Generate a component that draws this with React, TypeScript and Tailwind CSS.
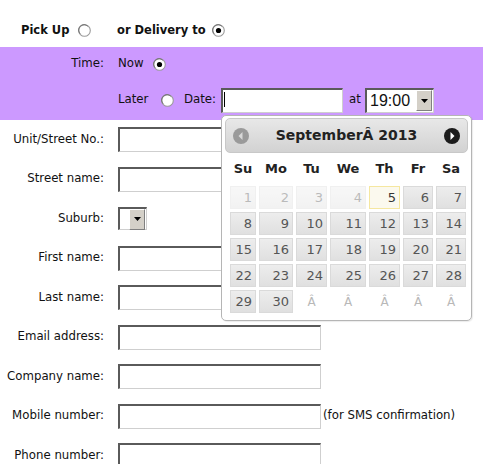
import React from 'react';

// Classic XP-style radio button
function Radio({ checked }: { checked?: boolean }) {
  return (
    <svg width="13" height="13" viewBox="0 0 13 13" className="shrink-0">
      <circle cx="6.5" cy="6.5" r="5.8" fill="#fff" stroke="#9a9a9a" strokeWidth="1.1" />
      <path d="M2.2 9.8 A5.3 5.3 0 0 1 9.8 2.2" fill="none" stroke="#6f6f6f" strokeWidth="1" />
      {checked && <circle cx="6.5" cy="6.5" r="2.6" fill="#000" />}
    </svg>
  );
}

function TextInput({ className = 'w-[203px]' }: { className?: string }) {
  return (
    <div
      className={`${className} h-[25px] bg-white border-t-2 border-l-2 border-b border-r border-t-[#5a5a5a] border-l-[#5a5a5a] border-b-[#cfcfcf] border-r-[#cfcfcf]`}
    />
  );
}

function SelectArrow() {
  return (
    <div className="w-[16px] h-[21px] bg-[#d4d0c8] border border-t-white border-l-white border-b-[#808080] border-r-[#808080] flex items-center justify-center">
      <svg width="7" height="4" viewBox="0 0 7 4">
        <path d="M0 0 H7 L3.5 4 Z" fill="#000" />
      </svg>
    </div>
  );
}

const labelFont = { fontFamily: 'Tahoma, "DejaVu Sans", sans-serif' };

function Row({ label, children }: { label: string; children: React.ReactNode }) {
  return (
    <div className="flex items-center h-[25px] mb-[14.5px]">
      <div className="w-[104px] text-right text-[11.75px] text-[#111]">{label}</div>
      <div className="ml-[14px] flex items-center">{children}</div>
    </div>
  );
}

const days = [
  { n: '1', s: 'dis' },
  { n: '2', s: 'dis' },
  { n: '3', s: 'dis' },
  { n: '4', s: 'dis' },
  { n: '5', s: 'today' },
  { n: '6', s: '' },
  { n: '7', s: '' },
];

function Calendar() {
  const cells: { n: string; s: string }[] = [...days];
  for (let i = 8; i <= 30; i++) cells.push({ n: String(i), s: '' });
  for (let i = 0; i < 5; i++) cells.push({ n: 'Â', s: 'empty' });
  const names = ['Su', 'Mo', 'Tu', 'We', 'Th', 'Fr', 'Sa'];

  return (
    <div
      className="absolute left-[221px] top-[115px] w-[251px] h-[206px] bg-white border border-[#b5b5b5] rounded-[5px] shadow-[1px_1px_1px_rgba(0,0,0,0.08)]"
      style={{ fontFamily: 'Verdana, "DejaVu Sans", sans-serif' }}
    >
      <div className="mx-[3px] mt-[2px] h-[35px] rounded-[5px] border border-[#c8c8c8] bg-gradient-to-b from-[#e8e8e8] to-[#d2d2d2] flex items-center justify-between px-[6px]">
        <svg width="18" height="18" viewBox="0 0 18 18">
          <circle cx="9" cy="9" r="8" fill="#9a9a9a" />
          <path d="M10.5 5 L6.5 9 L10.5 13 Z" fill="#d8d8d8" />
        </svg>
        <div className="text-[14px] font-bold text-[#222]">SeptemberÂ 2013</div>
        <svg width="18" height="18" viewBox="0 0 18 18">
          <circle cx="9" cy="9" r="8" fill="#1c1c1c" />
          <path d="M7.5 5 L11.5 9 L7.5 13 Z" fill="#fff" />
        </svg>
      </div>
      <div className="ml-[8px] mt-[2px] grid grid-cols-[26px_34px_31px_36px_31px_30px_30px] gap-x-[3px] gap-y-[3px]">
        {names.map((d) => (
          <div key={d} className="h-[28px] flex items-center justify-center text-[13px] font-bold text-[#222]">
            {d}
          </div>
        ))}
        {cells.map((c, i) =>
          c.s === 'empty' ? (
            <div key={i} className="h-[23px] flex items-center justify-center text-[12px] text-[#b8b8b8]">
              Â
            </div>
          ) : (
            <div
              key={i}
              className={`h-[23px] flex items-center justify-end pr-[3px] text-[13px] border ${
                c.s === 'today'
                  ? 'border-[#f5e7a0] bg-[#fbf9ee] text-[#363636]'
                  : 'border-[#dadada] bg-gradient-to-b from-[#ededed] to-[#e0e0e0] text-[#555]'
              } ${c.s === 'dis' ? 'opacity-40' : ''}`}
            >
              {c.n}
            </div>
          )
        )}
      </div>
    </div>
  );
}

export default function App() {
  return (
    <div className="relative w-[483px] h-[464px] bg-white overflow-hidden" style={labelFont}>
      {/* Pick up / delivery */}
      <div className="h-[47px] pt-[14px] pl-[21px] flex items-center text-[11.5px] font-bold text-[#111]">
        <span className="w-[57px]">Pick Up</span>
        <Radio />
        <span className="ml-[26px] w-[95px]">or Delivery to</span>
        <Radio checked />
      </div>

      {/* Time band */}
      <div className="h-[73px] bg-[#cc99ff] text-[11.75px] text-[#111]">
        <div className="h-[34px] flex items-center">
          <div className="w-[104px] text-right">Time:</div>
          <span className="ml-[14px] w-[35px]">Now</span>
          <Radio checked />
        </div>
        <div className="h-[38px] flex items-center pl-[118px]">
          <span className="w-[43px]">Later</span>
          <Radio />
          <span className="ml-[10px] w-[37px]">Date:</span>
          <div className="relative">
            <TextInput className="w-[122px]" />
            <div className="absolute left-[3px] top-[4px] w-px h-[15px] bg-black" />
          </div>
          <span className="ml-[6px] w-[16px]">at</span>
          <div className="w-[69px] h-[25px] bg-white border-t-2 border-l-2 border-b border-r border-t-[#5a5a5a] border-l-[#5a5a5a] border-b-[#cfcfcf] border-r-[#cfcfcf] flex items-center justify-between pl-[3px] pr-px">
            <span className="text-[16px] text-[#111]" style={{ fontFamily: '"Liberation Sans", Arial, sans-serif' }}>
              19:00
            </span>
            <SelectArrow />
          </div>
        </div>
      </div>

      {/* Address form */}
      <div className="pt-[7px]">
        <Row label="Unit/Street No.:">
          <TextInput />
        </Row>
        <Row label="Street name:">
          <TextInput />
        </Row>
        <Row label="Suburb:">
          <div className="w-[29px] h-[23px] bg-white border-t-2 border-l-2 border-b border-r border-t-[#5a5a5a] border-l-[#5a5a5a] border-b-[#cfcfcf] border-r-[#cfcfcf] flex items-center justify-end pr-px">
            <SelectArrow />
          </div>
        </Row>
        <Row label="First name:">
          <TextInput />
        </Row>
        <Row label="Last name:">
          <TextInput />
        </Row>
        <Row label="Email address:">
          <TextInput />
        </Row>
        <Row label="Company name:">
          <TextInput />
        </Row>
        <Row label="Mobile number:">
          <TextInput />
          <span className="ml-[2px] text-[11.75px] text-[#111]">(for SMS confirmation)</span>
        </Row>
        <Row label="Phone number:">
          <TextInput />
        </Row>
      </div>

      <Calendar />
    </div>
  );
}
